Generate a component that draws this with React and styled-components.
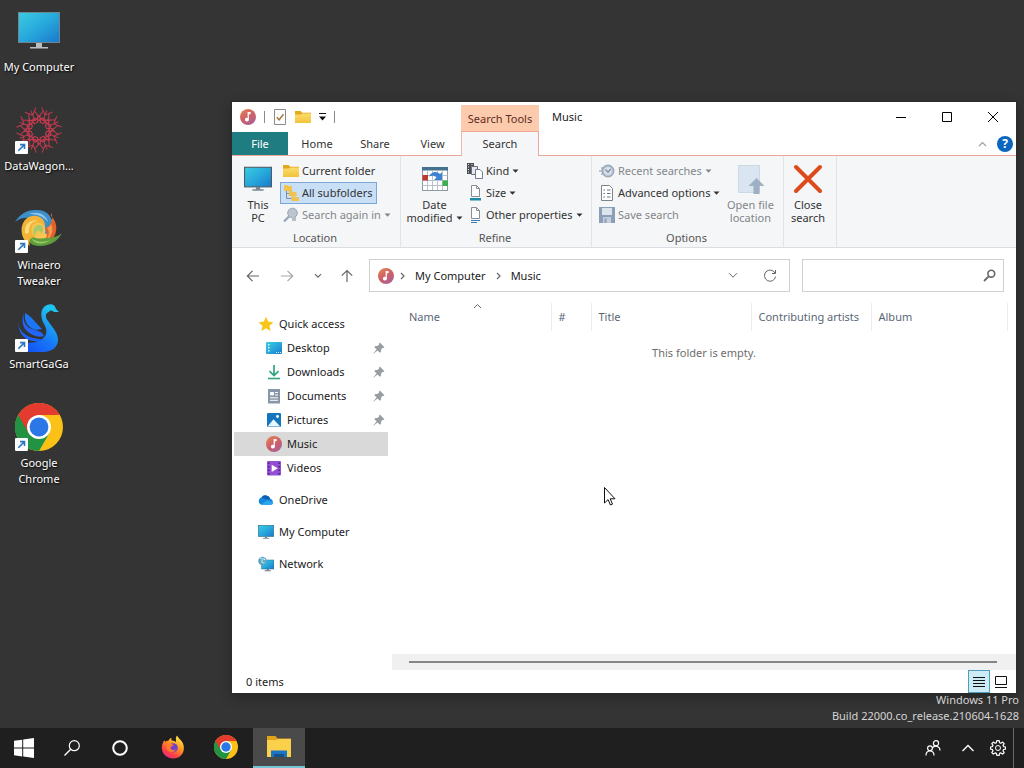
import React from "react";
import styled, { createGlobalStyle, css } from "styled-components";

const GlobalStyle = createGlobalStyle`
  * {
    box-sizing: border-box;
  }
  body {
    margin: 0;
    background: #343434;
    font-family: "Noto Sans", "Open Sans", sans-serif;
    font-size: 11px;
    line-height: 16px;
    color: #1a1a1a;
  }
  button, input {
    font: inherit;
    color: inherit;
    border: none;
    background: none;
    padding: 0;
    margin: 0;
  }
  a {
    color: inherit;
    text-decoration: none;
  }
  svg {
    display: block;
    flex: none;
  }
`;

/* ---------- desktop ---------- */

const Screen = styled.div`
  display: flex;
  flex-direction: column;
  min-height: 100vh;
`;
const Desktop = styled.main`
  position: relative;
  flex: 1;
  background: #343434;
`;
const Shortcuts = styled.div`
  display: flex;
  flex-direction: column;
  width: 78px;
`;
const ShortcutLink = styled.a`
  display: flex;
  flex-direction: column;
  align-items: center;
  gap: 4px;
  min-height: 99px;
  padding-top: 7px;
  color: #fff;
  text-align: center;
  text-shadow: 1px 1px 2px #000;
`;
const ShortcutIcon = styled.span`
  position: relative;
`;
const Arrow = styled.span`
  position: absolute;
  left: 0;
  bottom: 0;
`;
const Watermark = styled.div`
  position: absolute;
  right: 5px;
  bottom: 4px;
  color: #d4d4d4;
  text-align: right;
`;
const Pointer = styled.div`
  position: absolute;
  left: 604px;
  top: 487px;
  pointer-events: none;
`;

/* ---------- window ---------- */

const Window = styled.section`
  position: absolute;
  top: 102px;
  left: 232px;
  right: 8px;
  bottom: 35px;
  display: flex;
  flex-direction: column;
  background: #fff;
  box-shadow: 0 0 0 1px #2b2b2b, 0 4px 12px rgba(0, 0, 0, 0.3);
`;
const TitleBar = styled.header`
  display: flex;
  height: 30px;
`;
const QuickBar = styled.div`
  display: flex;
  align-items: center;
  gap: 8px;
  width: 229px;
  padding-left: 8px;
`;
const Divider = styled.span`
  width: 1px;
  height: 12px;
  background: #8a8a8a;
`;
const PlainButton = styled.button`
  display: flex;
  align-items: center;
  justify-content: center;
`;
const ToolsLabel = styled.div`
  width: 78px;
  margin-top: 3px;
  background: #fccbad;
  border-bottom: 1px solid #f2a68d;
  color: #5c2b1e;
  line-height: 28px;
  text-align: center;
`;
const WindowTitle = styled.h1`
  flex: 1;
  margin: 0;
  padding-left: 13px;
  font-size: 11px;
  font-weight: 400;
  line-height: 30px;
`;
const CaptionButton = styled(PlainButton)`
  width: 46px;
  height: 29px;
`;
const TabRow = styled.div`
  display: flex;
  height: 24px;
  border-bottom: 1px solid #eda79d;
`;
const Tab = styled.button`
  width: ${(p) => p.$width || 58}px;
  color: #333;
  ${(p) =>
    p.$file &&
    css`
      background: #1f7d82;
      color: #fff;
    `}
  ${(p) =>
    p.$active &&
    css`
      height: 24px;
      background: #f5f6f7;
      border-left: 1px solid #f2b9a5;
      border-right: 1px solid #eda79d;
    `}
`;
const TabTools = styled.div`
  display: flex;
  align-items: center;
  gap: 10px;
  margin-left: auto;
  padding-right: 3px;
`;
const HelpMark = styled.span`
  width: 16px;
  height: 16px;
  border-radius: 8px;
  background: #0b66bd;
  color: #fff;
  font-size: 12px;
  font-weight: 700;
  line-height: 16px;
`;
const Ribbon = styled.div`
  display: flex;
  height: 92px;
  background: #f5f6f7;
  border-bottom: 1px solid #dcdde0;
`;
const Group = styled.div`
  display: flex;
  flex-direction: column;
  width: ${(p) => p.$width}px;
  padding-top: 4px;
  border-right: 1px solid #e2e3e6;
`;
const GroupBody = styled.div`
  display: flex;
  height: 69px;
  padding-left: 4px;
`;
const GroupLabel = styled.div`
  padding-right: 2px;
  color: #555;
  line-height: 18px;
  text-align: center;
`;
const Stack = styled.div`
  display: flex;
  flex-direction: column;
  align-items: flex-start;
`;
const BigButton = styled.button`
  display: flex;
  flex-direction: column;
  align-items: center;
  gap: 3px;
  width: ${(p) => p.$width}px;
  padding-top: 3px;
  line-height: 13px;
  white-space: nowrap;
  color: ${(p) => (p.$muted ? "#82868c" : "#333")};
`;
const BigIcon = styled.span`
  display: flex;
  align-items: center;
  justify-content: center;
  height: 32px;
`;
const SmallButton = styled.button`
  display: flex;
  align-items: center;
  gap: 3px;
  height: 22px;
  padding: 0 4px 0 2px;
  border: 1px solid ${(p) => (p.$active ? "#7da7d9" : "transparent")};
  background: ${(p) => (p.$active ? "#c9dff5" : "none")};
  color: ${(p) => (p.$muted ? "#82868c" : "#333")};
  white-space: nowrap;
`;
const CaretText = styled.span`
  display: flex;
  align-items: center;
  gap: 3px;
`;

const AddressRow = styled.div`
  display: flex;
  align-items: center;
  height: 55px;
  padding: 0 12px 0 5px;
`;
const HistoryButtons = styled.div`
  display: flex;
  width: 132px;
`;
const HistoryButton = styled(PlainButton)`
  width: ${(p) => p.$width || 32}px;
  height: 32px;
`;
const Address = styled.nav`
  display: flex;
  flex: 1;
  align-items: center;
  gap: 6px;
  height: 33px;
  padding: 0 10px 0 8px;
  border: 1px solid #d0d0d0;
`;
const PathLink = styled.a`
  margin: 0 4px;
`;
const AddressTools = styled.div`
  display: flex;
  gap: 23px;
  margin-left: auto;
`;
const SearchBox = styled.label`
  display: flex;
  align-items: center;
  width: 202px;
  height: 33px;
  margin-left: 12px;
  padding: 0 7px;
  border: 1px solid #d0d0d0;
`;
const SearchInput = styled.input`
  flex: 1;
  min-width: 0;
  outline: none;
`;

const Body = styled.div`
  display: flex;
  flex: 1;
  min-height: 0;
`;
const Tree = styled.nav`
  display: flex;
  flex-direction: column;
  width: 160px;
  padding: 9px 4px 0 2px;
`;
const TreeItem = styled.a`
  display: flex;
  align-items: center;
  gap: 5px;
  height: 24px;
  padding: 0 3px 0 ${(p) => (p.$child ? 32 : 24)}px;
  margin-top: ${(p) => (p.$spaced ? 8 : 0)}px;
  background: ${(p) => (p.$selected ? "#d9d9d9" : "none")};
`;
const PinSlot = styled.span`
  margin-left: auto;
`;
const Content = styled.div`
  display: flex;
  flex: 1;
  flex-direction: column;
  min-width: 0;
`;
const Listing = styled.table`
  align-self: flex-start;
  margin-left: 10px;
  border-collapse: collapse;
  table-layout: fixed;
  width: 605px;
`;
const HeadCell = styled.th`
  position: relative;
  width: ${(p) => p.$width}px;
  height: 28px;
  padding: 0 7px;
  border-right: 1px solid #ececec;
  color: #5a6675;
  font-weight: 400;
  text-align: left;
  white-space: nowrap;
`;
const SortMark = styled.span`
  position: absolute;
  top: 0;
  left: 71px;
`;
const Empty = styled.p`
  flex: 1;
  margin: 0;
  padding-top: 14px;
  color: #6d6d6d;
  text-align: center;
`;
const ScrollTrack = styled.div`
  display: flex;
  align-items: center;
  height: 16px;
  padding: 0 19px 0 17px;
  background: #f0f0f0;
`;
const ScrollThumb = styled.div`
  flex: 1;
  height: 2px;
  background: #868686;
`;
const StatusBar = styled.footer`
  display: flex;
  align-items: center;
  height: 23px;
  padding: 0 4px 0 14px;
`;
const ViewButton = styled(PlainButton)`
  width: 22px;
  height: 23px;
  border: 1px solid ${(p) => (p.$active ? "#4b9fbd" : "transparent")};
  background: ${(p) => (p.$active ? "#cdebf6" : "none")};
`;
const Spacer = styled.span`
  flex: 1;
`;

/* ---------- taskbar ---------- */

const Taskbar = styled.footer`
  display: flex;
  height: 40px;
  background: #1f1f1f;
`;
const TaskButton = styled(PlainButton)`
  width: ${(p) => p.$width || 48}px;
`;
const Apps = styled.div`
  display: flex;
  gap: 1px;
  margin-left: 3px;
`;
const AppButton = styled(PlainButton)`
  width: 52px;
  border-bottom: 2px solid ${(p) => (p.$open ? "#76c5d6" : "transparent")};
  background: ${(p) => (p.$open ? "#4a4a4a" : "none")};
`;
const Tray = styled.div`
  display: flex;
  margin-left: auto;
`;
const ShowDesktop = styled.button`
  width: 11px;
  border-left: 1px solid #6b6b6b;
`;

/* ---------- icons ---------- */

const Gradients = () => (
  <svg width="0" height="0" style={{ position: "absolute" }} aria-hidden="true">
    <defs>
      <linearGradient id="screen" x1="0" y1="0" x2="1" y2="1">
        <stop offset="0" stopColor="#3ccbe0" />
        <stop offset="0.5" stopColor="#27a9dc" />
        <stop offset="1" stopColor="#1a78cc" />
      </linearGradient>
      <linearGradient id="music" x1="0.2" y1="0" x2="0.8" y2="1">
        <stop offset="0" stopColor="#e08058" />
        <stop offset="0.5" stopColor="#cf5f66" />
        <stop offset="1" stopColor="#a3639c" />
      </linearGradient>
      <linearGradient id="folder" x1="0" y1="0" x2="0" y2="1">
        <stop offset="0" stopColor="#fbdc6c" />
        <stop offset="1" stopColor="#f2c33c" />
      </linearGradient>
      <linearGradient id="swan" x1="0" y1="1" x2="0.6" y2="0">
        <stop offset="0" stopColor="#1547f5" />
        <stop offset="0.5" stopColor="#167bf7" />
        <stop offset="1" stopColor="#1fc4ee" />
      </linearGradient>
      <linearGradient id="fox" x1="0.8" y1="0" x2="0.2" y2="1">
        <stop offset="0" stopColor="#fff04a" />
        <stop offset="0.4" stopColor="#ff9a1f" />
        <stop offset="0.75" stopColor="#fb4048" />
        <stop offset="1" stopColor="#e4268c" />
      </linearGradient>
    </defs>
  </svg>
);

const MusicIcon = ({ size = 16 }) => (
  <svg width={size} height={size} viewBox="0 0 16 16">
    <circle cx="8" cy="8" r="8" fill="url(#music)" />
    <path d="M7.6 3h3v2.2H8.9v5.5a2 1.8 0 1 1-1.3-1.7z" fill="#fff" />
  </svg>
);

const FolderIcon = ({ size = 16 }) => (
  <svg width={size} height={size} viewBox="0 0 16 16">
    <path d="M0 2h5.600l1.600 1.800H16V14H0z" fill="#e3a81c" />
    <path d="M0 5.500h6l1.400-1H16V14H0z" fill="url(#folder)" />
  </svg>
);

const MonitorIcon = ({ size = 16, frame = "#2c6f8e" }) => (
  <svg width={size} height={size} viewBox="0 0 16 16">
    <rect x="0.3" y="1.3" width="15.4" height="11.2" fill="url(#screen)" stroke={frame} strokeWidth="0.6" />
    <path d="M6.8 12.5h2.4v1.4h2v.8H4.800v-.8h2z" fill="#7a8790" />
  </svg>
);

const Caret = () => (
  <svg width="7" height="4" viewBox="0 0 7 4">
    <path d="M.5.5h6l-3 3.200z" fill="currentColor" />
  </svg>
);

const Stroke = ({ d, w = 16, h = 16, width = 1.2, color = "#666" }) => (
  <svg width={w} height={h} viewBox={`0 0 ${w} ${h}`}>
    <path d={d} fill="none" stroke={color} strokeWidth={width} />
  </svg>
);

const ChromeIcon = ({ size = 24 }) => (
  <svg width={size} height={size} viewBox="0 0 48 48">
    <circle cx="24" cy="24" r="24" fill="#fbc116" />
    <path d="M24 24 3.2 12A24 24 0 0 0 24 48l10.4-18z" fill="#229342" />
    <path d="M24 12h20.8A24 24 0 0 0 3.2 12l10.4 18L24 24z" fill="#e33b2e" />
    <circle cx="24" cy="24" r="12" fill="#fff" />
    <circle cx="24" cy="24" r="9.4" fill="#2b77e8" />
  </svg>
);

const DesktopMonitor = () => (
  <svg width="48" height="48" viewBox="0 0 48 48">
    <rect x="3.5" y="5.5" width="41" height="30" fill="url(#screen)" stroke="#6c8791" />
    <path d="M21 36h6v4h6v1.500H15V40h6z" fill="#b9bec1" />
  </svg>
);

const WagonIcon = () => (
  <svg width="48" height="48" viewBox="0 0 48 48">
    <g fill="none" stroke="#bf3a4e" strokeWidth="1">
      {[0, 45, 90, 135, 180, 225, 270, 315].map((a) => (
        <g key={a} transform={`rotate(${a + 22} 24 24)`}>
          <path d="M24 14 36 8M24 14 12 8M24 3v11M18 2l6 6 6-6M19 16l5-5 5 5M17 10l3 8M31 10l-3 8" />
          <circle cx="24" cy="14" r="2.500" />
        </g>
      ))}
    </g>
  </svg>
);

const WinaeroIcon = () => (
  <svg width="48" height="48" viewBox="0 0 48 48">
    <circle cx="24" cy="23" r="15" fill="#f6c552" />
    <path d="M0 17C5 9 12 5 20 5c10-1 17 5 17 13 0 7-4 11-7 11 2-9-3-15-12-16-8-1-14 0-18 4z" fill="#3b8fcb" />
    <path d="M14 9c8-3 17 0 19 8-5-6-11-8-19-8z" fill="#8cc6ea" />
    <path d="M37 8c-1 1-1 2-1 3 8 7 7 21-3 27-2 1-5 2-7 2 7-6 7-12 4-17 5-1 8-6 7-15z" fill="#e2602a" />
    <path d="M36 19c3 6 1 13-5 17 3-5 4-10 1-13 2-1 3-2 4-4z" fill="#f59a4c" />
    <path d="M47 28c-4 8-12 13-22 13-10 0-16-6-13-17 2 8 10 11 18 9 7 0 13-1 17-5z" fill="#5f9d3c" />
    <path d="M16 33c6 5 14 4 20 2-7 5-16 5-20-2z" fill="#9acb62" />
    <path d="M15 41C4 33 4 17 14 12c9-4 17 2 16 10-3-5-11-6-13 0-1 4 0 7 3 10-5 0-7 4-5 9z" fill="#f4b336" />
    <path d="M10 28c-1-8 5-14 13-12-6 0-9 4-9 9 0 3-1 5-4 3z" fill="#fbdc7c" />
    <path d="M20 31c-4-6 0-12 5-11 4 1 4 6 1 9 0-4-4-4-5-1z" fill="#a7c96a" />
  </svg>
);

const SwanIcon = () => (
  <svg width="48" height="48" viewBox="0 0 48 48">
    <path
      d="M34 8c-4 1-4 5-1 9 5 7 10 12 10 19 0 7-6 12-15 12H12c-4-4-6-7-7-12 7 4 15 3 21 0 6-4 7-9 3-16-4-7-4-16 3-19 5-2 8 0 9 4l3 3h-5c-2-2-4-2-5 0z"
      fill="url(#swan)"
    />
    <path d="M9 9c-2 10 3 15 11 17 5 1 8 3 9 6-3 1-7 1-11-1C9 27 5 19 9 9z" fill="#2365f7" />
    <path d="M3 17c0 9 7 15 15 17 4 1 8 1 10 2-9 4-25 0-25-19z" fill="#1c62f8" />
    <path d="M10 9c6 3 10 9 17 16l-6 1C13 24 9 18 10 9z" fill="#1a76f6" />
  </svg>
);

const ShortcutArrow = () => (
  <svg width="13" height="13" viewBox="0 0 13 13">
    <rect width="13" height="13" rx="1" fill="#fdfdfd" />
    <path d="M3.3 9.8 9 4.1M5 3.6h4.500v4.500" fill="none" stroke="#2a78c0" strokeWidth="1.6" />
  </svg>
);

const FirefoxIcon = () => (
  <svg width="24" height="24" viewBox="0 0 24 24">
    <path
      d="M3.4 5.2c.5.8.6 1.1 1 1.5 1-.8 2-1 3-.9C8.400 3.800 9.800 3 10.500 2.800c-.4 1-.3 2.200.5 2.700 1.500.600 3 .500 4 1.500C15 4.500 14.300 2.300 16.200.6c.6 3 5.800 4.800 6.600 10.800C23.600 18.500 18.500 23.500 12 23.500 5.500 23.500.8 18.500.8 12.800c0-3 1.100-5.600 2.600-7.600z"
      fill="url(#fox)"
    />
    <circle cx="12.200" cy="12.800" r="4.600" fill="#7542c5" />
    <path d="M6.500 9.500c2-1.500 4.500-.5 6 .5-.5 1.300-2.500 1.200-3 2.500 0 2.500 3 3.500 5.500 2-1.500 3.500-8 3.500-9.200-.5-.3-1.500 0-3 .700-4.500z" fill="#ff7a2a" />
  </svg>
);

const ExplorerIcon = () => (
  <svg width="24" height="22" viewBox="0 0 24 22">
    <path d="M0 0h8.500l2 2.500H24V21H0z" fill="#e0a11b" />
    <path d="M0 4h9l2-1h13v18H0z" fill="#fbd14b" />
    <path d="M4 21v-6.500h16V21h-3v-3H7v3z" fill="#1a74c4" />
    <path d="M7 21v-3h10v3z" fill="#155089" />
  </svg>
);

const PinIcon = () => (
  <svg width="12" height="12" viewBox="0 0 12 12">
    <path d="M6.800.5 11.500 5.200l-1.200.7-.5-.1-1.900 1.900.1 2L6.900 10.800 4.500 8.400.8 11.600l-.4-.4 3.200-3.700L1.300 5.100 2.400 4l2 .1L6.300 2.200l-.2-.6z" fill="#979da3" />
  </svg>
);

const StarIcon = () => (
  <svg width="16" height="16" viewBox="0 0 16 16">
    <path d="m8 .8 2.200 4.800 5.200.6-3.900 3.500 1.100 5.200L8 12.300l-4.600 2.600 1.100-5.200L.6 6.200l5.200-.6z" fill="#f8c51c" />
  </svg>
);

const DesktopIcon = () => (
  <svg width="16" height="16" viewBox="0 0 16 16">
    <rect y="2" width="16" height="12" rx="1" fill="url(#screen)" />
    <path d="M2 4h1.500v1.500H2zM2 7h1.500v1.500H2zM2 10h1.500v1.500H2z" fill="#d9f4fb" />
    <path d="M10 12.500h1M12 12.500h1M14 12.500h1" stroke="#d9f4fb" />
  </svg>
);

const DownloadIcon = () => (
  <svg width="16" height="16" viewBox="0 0 16 16">
    <path d="M8 1v10.500M3.500 7.200 8 11.600l4.500-4.400" fill="none" stroke="#2fa583" strokeWidth="1.700" />
    <path d="M2 14.500h12" stroke="#2fa583" strokeWidth="1.600" />
  </svg>
);

const DocumentIcon = () => (
  <svg width="16" height="16" viewBox="0 0 16 16">
    <rect x="2" y="1" width="12" height="14.500" fill="#8797a8" />
    <path d="M4.500 4.500h3v2.500h-3z" fill="#fff" stroke="#fff" />
    <path d="M9 4.500h3M9 7h3M4 9.800h8M4 12.300h8" stroke="#fff" />
  </svg>
);

const PictureIcon = () => (
  <svg width="16" height="16" viewBox="0 0 16 16">
    <rect x="1" y="1" width="14" height="14" rx="1" fill="#1476bf" />
    <path d="m1.500 14.500 6-7.300 6.800 7.300z" fill="#e9f7ff" />
    <circle cx="11.500" cy="4.500" r="1.400" fill="#fff" />
  </svg>
);

const VideoIcon = () => (
  <svg width="16" height="16" viewBox="0 0 16 16">
    <rect x="1" y="1" width="14" height="14.500" rx="1" fill="#9450d2" />
    <path d="M2.800 2.500v13M13.200 2.500v13" stroke="#4a2080" strokeWidth="1.500" strokeDasharray="1.500 2" />
    <path d="m5.700 4.700 6 3.600-6 3.600z" fill="#fff" />
  </svg>
);

const CloudIcon = () => (
  <svg width="16" height="16" viewBox="0 0 16 16">
    <path d="M4 12.800a3.700 3.700 0 0 1-.6-7.200 5 5 0 0 1 8.900 1.100 3.200 3.200 0 0 1 .6 6.100z" fill="#1a86dc" />
    <path d="M3.400 5.600a5 5 0 0 1 8.900 1.100L9 7.800z" fill="#0f5fb4" />
    <path d="M3 12.500 9.500 8.300l5.800 2.800c-.3 1-1.200 1.700-2.400 1.700H4z" fill="#2ba7ee" />
  </svg>
);

const NetworkIcon = () => (
  <svg width="16" height="16" viewBox="0 0 16 16">
    <path d="M3.500 4H16v9H3.500z" fill="url(#screen)" stroke="#2c6f8e" strokeWidth=".5" />
    <path d="M8.500 13h2.500v1.300h2v.9H6.500v-.9h2z" fill="#7a8790" />
    <circle cx="4.500" cy="5" r="4.300" fill="#5aa7c4" />
    <path d="M2 2c2 0 3 1 2 3s1 2 2.500 1.500M6.500 1.500l-1 1.500 2 1" fill="none" stroke="#dff2f8" />
  </svg>
);

const CheckPageIcon = () => (
  <svg width="14" height="16" viewBox="0 0 14 16">
    <path d="M1.500.5h11v15h-11z" fill="#fdfdfd" stroke="#8b8b8b" />
    <path d="m3.800 8.300 2.300 2.500 4.400-5.600" fill="none" stroke="#a8783a" strokeWidth="1.400" />
  </svg>
);

const SubfoldersIcon = () => (
  <svg width="16" height="16" viewBox="0 0 16 16">
    <path d="M3.500 6v7.500H9M3.500 8.500H7" fill="none" stroke="#7d8fa5" />
    <path d="M1 0h3l1 1h4v5H1zM6 6h3l1 1h3.500v4H6zM8.500 11h3l1 1H16v4H8.500z" fill="#f0c250" />
  </svg>
);

const SearchAgainIcon = () => (
  <svg width="16" height="16" viewBox="0 0 16 16">
    <path d="m1 14.500 5-5" stroke="#9aa7b8" strokeWidth="2.400" />
    <circle cx="9.500" cy="6" r="4.800" fill="#bcc5d0" stroke="#9aa7b8" />
    <path d="M9 10h4v4H9z" fill="#b5bfcb" />
  </svg>
);

const CalendarIcon = () => (
  <svg width="32" height="32" viewBox="0 0 32 32">
    <rect x="3.500" y="4.500" width="25" height="23" fill="#fff" stroke="#8f99a3" />
    <path d="M3 4h26v3.500H3z" fill="#45708f" />
    <path d="M3.500 12.500h25M3.500 17.500h25M3.500 22.500h25M8.500 8v19M13.500 8v19M18.500 8v19M23.500 8v19" stroke="#b9c2ca" />
    <path d="M3.500 12h5.500v5.500H3.500z" fill="#c0392f" />
    <path d="M23.500 17.500H29V23h-5.500z" fill="#3fae4d" />
    <path d="M10 13.500c2-5 8-6 11-2.500l2-2v8h-8l2.500-2.500c-1.500-2-4.500-2.500-7.500-1z" fill="#3c82d0" />
  </svg>
);

const KindIcon = () => (
  <svg width="16" height="16" viewBox="0 0 16 16">
    <path d="M0 0h7v3H4v8H0z" fill="#4b4f54" />
    <path d="M1 1.500h1M1 4h1M1 6.500h1M1 9h1M4.500 1.500h1" stroke="#e8eaec" />
    <path d="M4.500 3.500h6v8h-6z" fill="#e6eaee" stroke="#6a7179" />
    <path d="M8.500 6.500h4.500l2.500 2.500v6.500h-7z" fill="#fff" stroke="#6b7d99" />
  </svg>
);

const PageIcon = ({ bar }) => (
  <svg width="16" height="16" viewBox="0 0 16 16">
    <path d="M4.500.5h5l3 3v8h-8z" fill="#fff" stroke="#878e96" />
    <path d="M9.500.5v3h3" fill="none" stroke="#878e96" />
    {bar ? (
      <path d="M3 13h11v2.500H3z" fill="#1b8ba6" />
    ) : (
      <path d="M4 13.500h9M4 15.500h6" stroke="#3c7bb5" />
    )}
  </svg>
);

const RecentIcon = () => (
  <svg width="16" height="16" viewBox="0 0 16 16">
    <path d="M0 8h4M2 11h4M2 5h3" stroke="#aab6c5" strokeWidth="1.500" />
    <circle cx="9" cy="8" r="5.800" fill="#b9c5d3" stroke="#94a3b6" strokeWidth="1.200" />
    <circle cx="9" cy="8" r="3.800" fill="#dbe2ea" />
    <path d="M6.500 6.500 9 9.200l2.800-3.200" fill="none" stroke="#7e8ea3" strokeWidth="1.300" />
  </svg>
);

const OptionsIcon = () => (
  <svg width="16" height="16" viewBox="0 0 16 16">
    <path d="M2.500.5h8l3 3v12h-11z" fill="#fff" stroke="#7c838b" />
    <path d="M4.500 5h1.500M4.500 8.500h1.500M4.500 12h1.500M8 5h3.500M8 8.500h3.500M8 12h3.500" stroke="#6a7179" strokeWidth="1.200" />
  </svg>
);

const SaveIcon = () => (
  <svg width="16" height="16" viewBox="0 0 16 16">
    <path d="M0 0h16v16H0z" fill="#8c9fb8" />
    <path d="M3 1h10v7H3z" fill="#dde4ec" />
    <path d="M4 10h8v6H4z" fill="#c4cfdc" />
    <path d="M5.500 11.500h2V16h-2z" fill="#8c9fb8" />
  </svg>
);

const OpenLocationIcon = () => (
  <svg width="32" height="32" viewBox="0 0 32 32">
    <path d="M4.500 2.500h21v27h-21z" fill="#dae5f1" stroke="#cbd8e6" />
    <path d="m22.500 15 8 8h-5v8h-6v-8h-5z" fill="#9fb0c4" />
  </svg>
);

const CloseSearchIcon = () => (
  <svg width="32" height="32" viewBox="0 0 32 32">
    <path d="m4 4 24 24M28 4 4 28" stroke="#dc4a1e" strokeWidth="4" strokeLinecap="round" />
  </svg>
);

/* ---------- page ---------- */

const shortcuts = [
  { label: "My Computer", icon: <DesktopMonitor /> },
  { label: "DataWagon...", icon: <WagonIcon />, arrow: true },
  { label: "Winaero Tweaker", icon: <WinaeroIcon />, arrow: true },
  { label: "SmartGaGa", icon: <SwanIcon />, arrow: true },
  { label: "Google Chrome", icon: <ChromeIcon size={48} />, arrow: true },
];

const places = [
  { label: "Quick access", icon: <StarIcon /> },
  { label: "Desktop", icon: <DesktopIcon />, child: true, pinned: true },
  { label: "Downloads", icon: <DownloadIcon />, child: true, pinned: true },
  { label: "Documents", icon: <DocumentIcon />, child: true, pinned: true },
  { label: "Pictures", icon: <PictureIcon />, child: true, pinned: true },
  { label: "Music", icon: <MusicIcon />, child: true, selected: true },
  { label: "Videos", icon: <VideoIcon />, child: true },
  { label: "OneDrive", icon: <CloudIcon />, spaced: true },
  { label: "My Computer", icon: <MonitorIcon />, spaced: true },
  { label: "Network", icon: <NetworkIcon />, spaced: true },
];

const columns = [
  { label: "Name", width: 149 },
  { label: "#", width: 40 },
  { label: "Title", width: 160 },
  { label: "Contributing artists", width: 120 },
  { label: "Album", width: 136 },
];

function RibbonItem({ icon, label, caret, ...rest }) {
  return (
    <SmallButton {...rest}>
      {icon}
      <CaretText>
        {label}
        {caret && <Caret />}
      </CaretText>
    </SmallButton>
  );
}

function RibbonBar() {
  return (
    <Ribbon>
      <Group $width={169}>
        <GroupBody>
          <BigButton $width={44}>
            <BigIcon>
              <MonitorIcon size={28} frame="#4d5a63" />
            </BigIcon>
            <span>
              This
              <br />
              PC
            </span>
          </BigButton>
          <Stack>
            <RibbonItem icon={<FolderIcon />} label="Current folder" />
            <RibbonItem icon={<SubfoldersIcon />} label="All subfolders" $active />
            <RibbonItem icon={<SearchAgainIcon />} label="Search again in" caret $muted />
          </Stack>
        </GroupBody>
        <GroupLabel>Location</GroupLabel>
      </Group>
      <Group $width={191}>
        <GroupBody>
          <BigButton $width={59}>
            <BigIcon>
              <CalendarIcon />
            </BigIcon>
            <span>
              Date
              <CaretText>
                modified
                <Caret />
              </CaretText>
            </span>
          </BigButton>
          <Stack>
            <RibbonItem icon={<KindIcon />} label="Kind" caret />
            <RibbonItem icon={<PageIcon bar />} label="Size" caret />
            <RibbonItem icon={<PageIcon />} label="Other properties" caret />
          </Stack>
        </GroupBody>
        <GroupLabel>Refine</GroupLabel>
      </Group>
      <Group $width={192}>
        <GroupBody>
          <Stack>
            <RibbonItem icon={<RecentIcon />} label="Recent searches" caret $muted />
            <RibbonItem icon={<OptionsIcon />} label="Advanced options" caret />
            <RibbonItem icon={<SaveIcon />} label="Save search" $muted />
          </Stack>
          <BigButton $width={50} $muted>
            <BigIcon>
              <OpenLocationIcon />
            </BigIcon>
            <span>
              Open file
              <br />
              location
            </span>
          </BigButton>
        </GroupBody>
        <GroupLabel>Options</GroupLabel>
      </Group>
      <Group $width={53}>
        <GroupBody>
          <BigButton $width={40}>
            <BigIcon>
              <CloseSearchIcon />
            </BigIcon>
            <span>
              Close
              <br />
              search
            </span>
          </BigButton>
        </GroupBody>
      </Group>
    </Ribbon>
  );
}

function Explorer() {
  return (
    <Window>
      <TitleBar>
        <QuickBar>
          <MusicIcon />
          <Divider />
          <PlainButton aria-label="Properties">
            <CheckPageIcon />
          </PlainButton>
          <PlainButton aria-label="New folder">
            <FolderIcon />
          </PlainButton>
          <PlainButton aria-label="Customize toolbar">
            <svg width="7" height="8" viewBox="0 0 7 8">
              <path d="M0 .5h7" stroke="#111" />
              <path d="M0 3.500h7l-3.500 4z" fill="#111" />
            </svg>
          </PlainButton>
          <Divider />
        </QuickBar>
        <ToolsLabel>Search Tools</ToolsLabel>
        <WindowTitle>Music</WindowTitle>
        <CaptionButton aria-label="Minimize">
          <Stroke w={10} h={10} d="M0 5.500h10" width={1} color="#000" />
        </CaptionButton>
        <CaptionButton aria-label="Maximize">
          <Stroke w={10} h={10} d="M.5.5h9v9h-9z" width={1} color="#000" />
        </CaptionButton>
        <CaptionButton aria-label="Close">
          <Stroke w={10} h={10} d="m0 0 10 10M10 0 0 10" width={1} color="#000" />
        </CaptionButton>
      </TitleBar>
      <TabRow>
        <Tab $width={56} $file>File</Tab>
        <Tab>Home</Tab>
        <Tab>Share</Tab>
        <Tab $width={57}>View</Tab>
        <Tab $width={78} $active>Search</Tab>
        <TabTools>
          <PlainButton aria-label="Collapse ribbon">
            <Stroke w={9} h={6} d="m1 5 3.500-3.500L8 5" color="#a0a0a0" />
          </PlainButton>
          <PlainButton aria-label="Help">
            <HelpMark>?</HelpMark>
          </PlainButton>
        </TabTools>
      </TabRow>
      <RibbonBar />
      <AddressRow>
        <HistoryButtons>
          <HistoryButton aria-label="Back">
            <Stroke d="M14 8H2.500M7.500 2.800 2.300 8l5.200 5.200" />
          </HistoryButton>
          <HistoryButton $width={36} aria-label="Forward">
            <Stroke d="M2 8h11.500M8.500 2.800 13.700 8l-5.200 5.200" color="#a8a8a8" />
          </HistoryButton>
          <HistoryButton $width={26} aria-label="Recent locations">
            <Stroke w={8} h={6} d="m1 1.200 3 3 3-3" />
          </HistoryButton>
          <HistoryButton aria-label="Up">
            <Stroke d="M8 14V2.500M2.800 7.700 8 2.500l5.200 5.200" />
          </HistoryButton>
        </HistoryButtons>
        <Address aria-label="Address">
          <MusicIcon />
          <Stroke w={5} h={8} d="m1 1 3 3-3 3" />
          <PathLink href="#computer">My Computer</PathLink>
          <Stroke w={5} h={8} d="m1 1 3 3-3 3" />
          <PathLink href="#music">Music</PathLink>
          <AddressTools>
            <PlainButton aria-label="Previous locations">
              <Stroke w={10} h={7} d="m1 1.200 4 4 4-4" width={1} />
            </PlainButton>
            <PlainButton aria-label="Refresh">
              <Stroke w={18} h={16} d="M14 5A5.600 5.600 0 1 0 14.600 8.500M14.500 2v3.500H11" width={1} />
            </PlainButton>
          </AddressTools>
        </Address>
        <SearchBox>
          <SearchInput type="text" aria-label="Search Music" />
          <svg width="13" height="13" viewBox="0 0 13 13">
            <circle cx="8.300" cy="4.700" r="3.400" fill="none" stroke="#666" strokeWidth="1.600" />
            <path d="m1 12 4.700-4.700" stroke="#666" strokeWidth="1.800" />
          </svg>
        </SearchBox>
      </AddressRow>
      <Body>
        <Tree aria-label="Places">
          {places.map((p) => (
            <TreeItem
              key={p.label}
              href={`#${p.label}`}
              $child={p.child}
              $spaced={p.spaced}
              $selected={p.selected}
            >
              {p.icon}
              {p.label}
              {p.pinned && (
                <PinSlot>
                  <PinIcon />
                </PinSlot>
              )}
            </TreeItem>
          ))}
        </Tree>
        <Content>
          <Listing>
            <thead>
              <tr>
                {columns.map((c) => (
                  <HeadCell key={c.label} $width={c.width}>
                    {c.label}
                    {c.label === "Name" && (
                      <SortMark>
                        <Stroke w={9} h={6} d="m1 5 3.500-3.500L8 5" width={1} />
                      </SortMark>
                    )}
                  </HeadCell>
                ))}
              </tr>
            </thead>
          </Listing>
          <Empty>This folder is empty.</Empty>
          <ScrollTrack>
            <ScrollThumb />
          </ScrollTrack>
        </Content>
      </Body>
      <StatusBar>
        0 items
        <Spacer />
        <ViewButton $active aria-label="Details view">
          <Stroke w={12} h={12} d="M0 1.500h12M0 4.500h12M0 7.500h12M0 10.500h12" width={1} color="#111" />
        </ViewButton>
        <ViewButton aria-label="Large icons view">
          <Stroke w={12} h={12} d="M.5.5h11v8H.5zM0 11.500h12" width={1} color="#111" />
        </ViewButton>
      </StatusBar>
    </Window>
  );
}

export default function App() {
  return (
    <Screen>
      <GlobalStyle />
      <Gradients />
      <Desktop>
        <Shortcuts>
          {shortcuts.map((s) => (
            <ShortcutLink key={s.label} href={`#${s.label}`}>
              <ShortcutIcon>
                {s.icon}
                {s.arrow && (
                  <Arrow>
                    <ShortcutArrow />
                  </Arrow>
                )}
              </ShortcutIcon>
              {s.label}
            </ShortcutLink>
          ))}
        </Shortcuts>
        <Explorer />
        <Watermark>
          Windows 11 Pro
          <br />
          Build 22000.co_release.210604-1628
        </Watermark>
        <Pointer>
          <svg width="13" height="20" viewBox="0 0 13 20">
            <path d="M.5 .5v15.500l3.600-3.400 2.300 5.400 2.100-.9-2.300-5.300h4.800z" fill="#fff" stroke="#111" />
          </svg>
        </Pointer>
      </Desktop>
      <Taskbar>
        <TaskButton aria-label="Start">
          <svg width="20" height="20" viewBox="0 0 20 20">
            <path d="M0 2.800 8.200 1.700v7.900H0zM9.200 1.500 20 0v9.600H9.200zM0 10.500h8.200v7.900L0 17.300zM9.200 10.500H20V20L9.200 18.500z" fill="#fff" />
          </svg>
        </TaskButton>
        <TaskButton aria-label="Search">
          <svg width="16" height="16" viewBox="0 0 16 16">
            <circle cx="10.300" cy="5.700" r="5" fill="none" stroke="#fff" strokeWidth="1.200" />
            <path d="M.5 15.500 6.700 9.300" stroke="#fff" strokeWidth="1.300" />
          </svg>
        </TaskButton>
        <TaskButton aria-label="Cortana">
          <svg width="16" height="16" viewBox="0 0 16 16">
            <circle cx="8" cy="8" r="6.800" fill="none" stroke="#fff" strokeWidth="2" />
          </svg>
        </TaskButton>
        <Apps>
          <AppButton aria-label="Firefox">
            <FirefoxIcon />
          </AppButton>
          <AppButton aria-label="Chrome">
            <ChromeIcon />
          </AppButton>
          <AppButton $open aria-label="File Explorer">
            <ExplorerIcon />
          </AppButton>
        </Apps>
        <Tray>
          <TaskButton $width={40} aria-label="People">
            <svg width="16" height="16" viewBox="0 0 16 16" fill="none" stroke="#fff" strokeWidth="1.200">
              <circle cx="5" cy="8.300" r="2.400" />
              <path d="M1 15.500c0-6 8-6 8 0" />
              <circle cx="11" cy="3.300" r="2.600" />
              <path d="M8 7.500c2.500-2.500 7-1 7 3" />
            </svg>
          </TaskButton>
          <TaskButton $width={30} aria-label="Hidden icons">
            <Stroke w={14} h={8} d="m1.500 7 5.500-5.500L12.500 7" width={1.4} color="#fff" />
          </TaskButton>
          <TaskButton $width={30} aria-label="Settings">
            <svg width="16" height="16" viewBox="0 0 16 16" fill="none" stroke="#fff">
              <circle cx="8" cy="8" r="2.500" />
              <path
                strokeWidth="1.200"
                strokeLinejoin="round"
                d="m6.800.7-.4 2-1.300.6-1.800-1.200-1.500 1.600 1.200 1.700-.6 1.200-1.900.4v2.100l1.900.4.6 1.300-1.200 1.700 1.500 1.600 1.800-1.200 1.300.5.4 2h2.400l.4-2 1.300-.5 1.800 1.200 1.500-1.600-1.200-1.700.6-1.300 1.900-.4V7l-1.900-.4-.6-1.200 1.200-1.700-1.500-1.600-1.800 1.200-1.300-.6-.4-2z"
              />
            </svg>
          </TaskButton>
          <ShowDesktop aria-label="Show desktop" />
        </Tray>
      </Taskbar>
    </Screen>
  );
}
